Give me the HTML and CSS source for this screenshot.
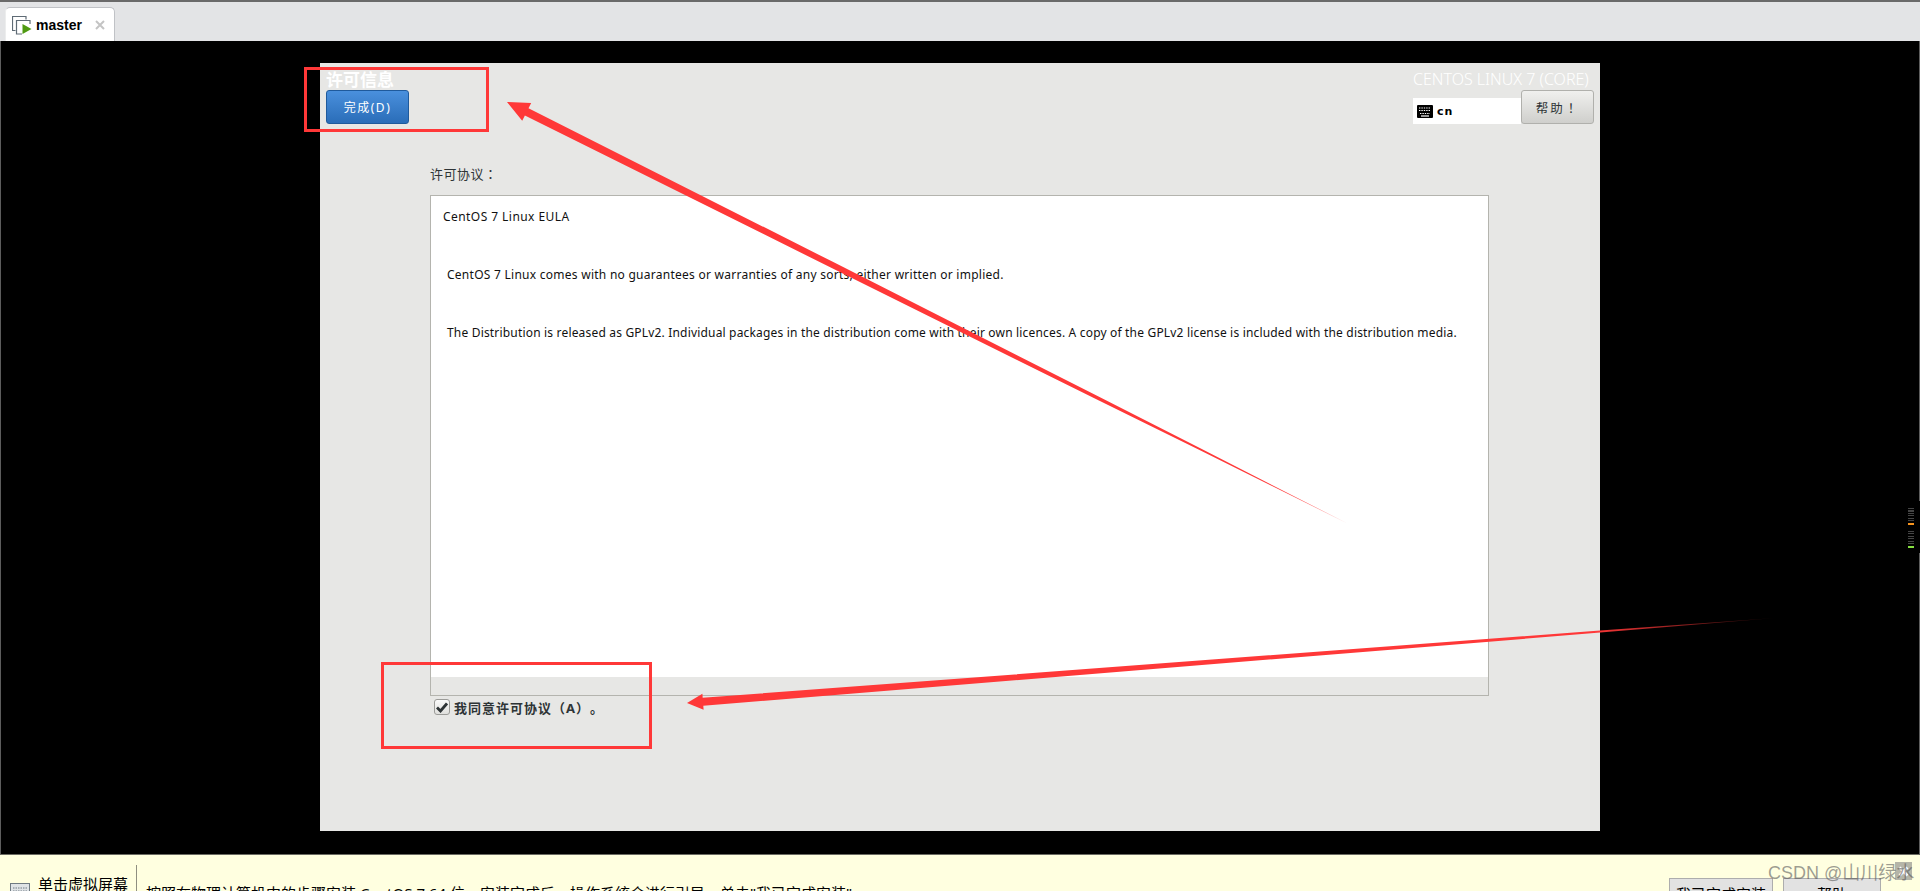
FILE: index.html
```html
<!DOCTYPE html>
<html lang="zh-CN">
<head>
<meta charset="utf-8">
<title>master</title>
<link rel="stylesheet" href="styles.css">
</head>
<body>
<div class="window">
  <header class="tabbar">
    <div class="tab">
      <svg class="tab-icon" width="20" height="19" viewBox="0 0 20 19">
        <path d="M3.500 14.500H0.500V0.500H14V3.500" fill="none" stroke="#5f6b75" stroke-width="1.200"/>
        <path d="M10 18H4.500V4.500H18V8" fill="none" stroke="#5f6b75" stroke-width="1.200"/>
        <path d="M10.500 8V18L19.500 13Z" fill="#4f9a12"/>
      </svg>
      <span class="tab-name">master</span>
      <svg class="tab-close" width="10" height="10" viewBox="0 0 10 10">
        <path d="M1 1L9 9M9 1L1 9" stroke="#c4c4c4" stroke-width="2"/>
      </svg>
    </div>
  </header>

  <main class="stage">
    <section class="panel">
      <div class="panel-head">
        <div class="head-left">
          <h1 class="title">许可信息</h1>
          <button class="btn-done">完成(D)</button>
        </div>
        <div class="head-right">
          <div class="product">CENTOS LINUX 7 (CORE)</div>
          <div class="head-row">
            <div class="layout">
              <svg width="16" height="13" viewBox="0 0 16 13">
                <rect width="16" height="13" rx="1" fill="#000"/>
                <path d="M2 3H14M2 5.500H14" stroke="#fff" stroke-width="1.200" stroke-dasharray="1.400 1"/>
                <path d="M3 8.500H13" stroke="#fff" stroke-width="1.200" stroke-dasharray="1.400 1"/>
                <path d="M4 11H12" stroke="#fff" stroke-width="1.200"/>
              </svg>
              <span class="layout-name">cn</span>
            </div>
            <button class="btn-help" lang="zh-TW">帮助！</button>
          </div>
        </div>
      </div>

      <div class="content">
        <div class="eula-label" lang="zh-TW">许可协议：</div>
        <div class="eula-box">
          <div class="eula-text">
            <p class="eula-head">CentOS 7 Linux EULA</p>
            <p class="eula-line eula-line-short">CentOS 7 Linux comes with no guarantees or warranties of any sorts, either written or implied.</p>
            <p class="eula-line">The Distribution is released as GPLv2. Individual packages in the distribution come with their own licences. A copy of the GPLv2 license is included with the distribution media.</p>
          </div>
        </div>
        <label class="agree">
          <span class="check">
            <svg width="12" height="11" viewBox="0 0 12 11"><path d="M1 5.500L4.500 9L11 1.500" fill="none" stroke="#2e3436" stroke-width="2.800"/></svg>
          </span>
          <span class="agree-text">我同意许可协议（A）。</span>
        </label>
      </div>
    </section>

    <div class="meters">
      <div class="meter meter-orange"></div>
      <div class="meter meter-green"></div>
    </div>
  </main>

  <footer class="hintbar">
    <div class="hint-left">
      <svg class="hint-icon" width="20" height="18" viewBox="0 0 20 18">
        <rect x="0.500" y="0.500" width="19" height="17" fill="#dfe3e6" stroke="#6f7a82"/>
        <path d="M3 5H17M3 8H17M3 11H17" stroke="#6f7a82" stroke-width="1.200" stroke-dasharray="1.500 1"/>
      </svg>
      <span class="hint-click">单击虚拟屏幕</span>
    </div>
    <div class="hint-main">按照在物理计算机中的步骤安装 CentOS 7 64 位。安装完成后，操作系统会进行引导，单击"我已完成安装"。</div>
    <div class="hint-actions">
      <button class="btn-foot btn-installed">我已完成安装</button>
      <button class="btn-foot btn-foot-help">帮助</button>
    </div>
  </footer>

  <button class="hint-close" aria-label="关闭">
    <svg width="11" height="11" viewBox="0 0 11 11"><path d="M1.500 1.500L9.500 9.500M9.500 1.500L1.500 9.500" stroke="#fff" stroke-width="2.600"/></svg>
  </button>
  <div class="watermark">CSDN @山川绿水</div>

  <svg class="marks" width="1920" height="891" viewBox="0 0 1920 891">
    <defs>
      <linearGradient id="fade1" gradientUnits="userSpaceOnUse" x1="1347" y1="523" x2="1270" y2="484">
        <stop offset="0" stop-color="#ff3838" stop-opacity="0.600"/>
        <stop offset="1" stop-color="#ff3838"/>
      </linearGradient>
      <linearGradient id="fade2" gradientUnits="userSpaceOnUse" x1="1775" y1="618" x2="1590" y2="632">
        <stop offset="0" stop-color="#ff3838" stop-opacity="0.100"/>
        <stop offset="1" stop-color="#ff3838"/>
      </linearGradient>
    </defs>
    <rect x="305.500" y="68.500" width="182" height="62" fill="none" stroke="#ff3838" stroke-width="3"/>
    <rect x="382.500" y="663.500" width="268" height="84" fill="none" stroke="#ff3838" stroke-width="3"/>
    <polygon points="1347.500,523.500 1200.300,448.300 1100.500,397.500 833.300,262.100 528.500,108.300 531.200,103 507,102 522.200,120.800 524.900,115.500 830.700,267.500 1098.900,400.500 1199.500,450.100" fill="url(#fade1)"/>
    <polygon points="1775,618 1600.100,630.600 1399.900,645.500 702.700,697.800 702.400,693.800 687,703 703.600,709.800 703.300,705.800 1400.100,648.900 1600.300,632.600" fill="url(#fade2)"/>
  </svg>
</div>
</body>
</html>
```

FILE: styles.css
```css
* { box-sizing: border-box; }
html, body { margin: 0; padding: 0; height: 891px; overflow: hidden; background: #000; }
button { font: inherit; margin: 0; padding: 0; }

.window {
  position: relative;
  display: flex;
  flex-direction: column;
  width: 1920px;
  height: 891px;
  overflow: hidden;
  font-family: "Noto Sans", "Noto Sans CJK SC", sans-serif;
}

/* tab strip */
.tabbar {
  flex: 0 0 41px;
  display: flex;
  align-items: flex-end;
  padding-left: 5px;
  background: #e3e4e6;
  border-top: 2px solid #6a6a6a;
}
.tab {
  display: flex;
  align-items: center;
  width: 110px;
  height: 34px;
  padding: 0 0 0 6px;
  background: #fff;
  border: 1px solid #c0c2c6;
  border-bottom: 0;
  border-radius: 5px 5px 0 0;
  border-left-color: #eceded;
}
.tab-icon { flex: none; margin-top: 2px; }
.tab-name {
  margin-left: 4px;
  font: bold 14px "Liberation Sans", sans-serif;
  color: #000;
}
.tab-close { margin-left: 13px; }

/* VM stage */
.stage {
  position: relative;
  flex: 0 0 814px;
  padding-top: 22px;
  background: #000;
  border-left: 1px solid #5d5d5d;
  border-right: 1px solid #5d5d5d;
  border-bottom: 1px solid #6b6b63;
}
.panel {
  width: 1280px;
  height: 768px;
  margin: 0 auto;
  background: #e7e7e5;
  color: #2e3436;
}
.panel-head {
  display: flex;
  justify-content: space-between;
  height: 61px;
  padding: 0 6px;
}
.head-left { display: flex; flex-direction: column; align-items: flex-start; }
.title {
  margin: 0;
  height: 27px;
  padding-top: 5px;
  font-size: 17px;
  line-height: 23px;
  font-weight: 700;
  color: #fff;
}
.btn-done {
  width: 83px;
  height: 34px;
  color: #fff;
  font-size: 12px;
  letter-spacing: 1.500px;
  background: linear-gradient(#4a90dd, #2a6db8);
  border: 1px solid #1f5a9c;
  border-radius: 3px;
}
.head-right { display: flex; flex-direction: column; width: 181px; }
.product {
  height: 27px;
  font-size: 16px;
  line-height: 27px;
  font-weight: 300;
  white-space: nowrap;
  color: #fff;
  padding-top: 3px;
}
.head-row { display: flex; align-items: flex-end; height: 34px; }
.layout {
  display: flex;
  align-items: center;
  width: 108px;
  height: 26px;
  padding-left: 4px;
  background: #fff;
}
.layout-name {
  margin-left: 4px;
  font: bold 11px "DejaVu Sans", sans-serif;
  letter-spacing: 1px;
  color: #000;
}
.btn-help {
  width: 73px;
  height: 34px;
  font-family: "Noto Sans CJK TC", sans-serif;
  font-size: 12.500px;
  letter-spacing: 2px;
  color: #2e3436;
  background: linear-gradient(#f0f0ee, #cfcfcc);
  border: 1px solid #b0b0ac;
  border-radius: 3px;
}

.content { width: 1059px; margin-left: 110px; }
.eula-label {
  height: 20px;
  margin-top: 40px;
  margin-bottom: 11px;
  font-family: "Noto Sans CJK TC", sans-serif;
  font-size: 13px;
  line-height: 20px;
  letter-spacing: 0.500px;
  color: #2e3436;
}
.eula-box {
  height: 501px;
  padding-bottom: 18px;
  border: 1px solid #b4b4ae;
}
.eula-text {
  height: 100%;
  background: #fff;
  color: #111;
  font-size: 12px;
  line-height: 20px;
  letter-spacing: 0.180px;
}
.eula-text p { margin: 0; white-space: nowrap; }
.eula-head { padding: 11px 0 0 12px; letter-spacing: 0.440px; }
.eula-line { padding: 38px 0 0 16px; }
.eula-text .eula-line-short { letter-spacing: 0.260px; }

.agree {
  display: flex;
  align-items: center;
  height: 18px;
  margin-top: 2px;
  padding-left: 4px;
}
.check {
  display: flex;
  align-items: center;
  justify-content: center;
  width: 16px;
  height: 16px;
  background: linear-gradient(#fafafa, #e0e0dd);
  border: 1px solid #9b9b98;
  border-radius: 3px;
}
.agree-text {
  margin-left: 4px;
  font-size: 13px;
  font-weight: 700;
  color: #2e3436;
  letter-spacing: 1px;
  text-spacing-trim: space-all;
}

/* activity meters over the stage edge */
.meters {
  position: absolute;
  top: 460px;
  right: -1px;
  width: 12px;
  height: 52px;
  padding-top: 7px;
  background: #000;
}
.meter {
  width: 6px;
  height: 17px;
  margin-bottom: 6px;
  background: repeating-linear-gradient(#444 0 1px, #000 1px 2.500px);
}
.meter-orange { border-bottom: 2px solid #f7941e; }
.meter-green { border-bottom: 2px solid #86e040; }

/* hint bar */
.hintbar {
  flex: 1;
  display: flex;
  align-items: flex-start;
  overflow: hidden;
  background: #ffffe0;
  color: #000;
}
.hint-left {
  display: flex;
  width: 137px;
  height: 60px;
  margin-top: 10px;
  border-right: 1px solid #8f8f80;
}
.hint-icon { margin: 18px 0 0 10px; flex: none; }
.hint-click {
  margin: 9px 0 0 8px;
  font-size: 15px;
  line-height: 20px;
  white-space: nowrap;
}
.hint-main {
  margin: 28px 0 0 9px;
  font-size: 15px;
  line-height: 20px;
  white-space: nowrap;
}
.hint-actions {
  display: flex;
  gap: 10px;
  margin: 23px 0 0 auto;
  padding-right: 39px;
}
.btn-foot {
  height: 30px;
  font-size: 15px;
  color: #000;
  background: #e2e2e2;
  border: 1px solid #adadad;
}
.btn-installed { width: 104px; }
.btn-foot-help { width: 98px; }
.hint-close {
  position: absolute;
  left: 1895px;
  top: 862px;
  display: flex;
  align-items: center;
  justify-content: center;
  width: 17px;
  height: 18px;
  background: #b5b5a8;
  border: 0;
}
.watermark {
  position: absolute;
  left: 1768px;
  top: 862px;
  font: 18px "Liberation Sans", "Noto Sans CJK SC", sans-serif;
  line-height: 22px;
  color: rgba(90, 90, 90, 0.6);
  white-space: nowrap;
}
.marks { position: absolute; left: 0; top: 0; pointer-events: none; }
```
